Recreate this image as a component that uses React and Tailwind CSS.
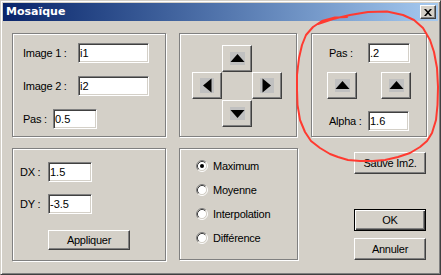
const label = 'text-[11px] tracking-[-0.25px] text-black'

function Field({ value, className }) {
  return (
    <input
      readOnly
      value={value}
      className={`h-[20px] border border-t-[#808080] border-l-[#808080] border-r-white border-b-white bg-white pl-[1px] text-[11px] text-black shadow-[inset_1px_1px_#404040,inset_-1px_-1px_#d4d0c8] outline-none ${className}`}
    />
  )
}

function Btn({ children, className = '', isDefault = false }) {
  const frame = isDefault
    ? 'border border-black shadow-[inset_1px_1px_#fff,inset_-1px_-1px_#404040,inset_-2px_-2px_#808080]'
    : 'border border-t-white border-l-white border-r-[#404040] border-b-[#404040] shadow-[inset_-1px_-1px_#808080]'
  return (
    <div className={`flex items-center justify-center bg-[#d4d0c8] ${frame} ${className}`}>
      {children}
    </div>
  )
}

function Arrow({ dir }) {
  if (dir === 'up' || dir === 'down') {
    return (
      <svg width="15" height="13" viewBox="0 0 15 13">
        <rect width="15" height="13" fill="#c0c0c0" />
        {dir === 'up' ? (
          <polygon points="7.5,2 14.5,10 0.5,10" fill="#000" />
        ) : (
          <polygon points="0.5,3 14.5,3 7.5,11" fill="#000" />
        )}
      </svg>
    )
  }
  return (
    <svg width="14" height="15" viewBox="0 0 14 15">
      <rect width="14" height="15" fill="#c0c0c0" />
      {dir === 'left' ? (
        <polygon points="3,7.5 11.5,0.5 11.5,14.5" fill="#000" />
      ) : (
        <polygon points="11,7.5 2.5,0.5 2.5,14.5" fill="#000" />
      )}
    </svg>
  )
}

function ArrowBtn({ dir, className = '' }) {
  return (
    <Btn className={`h-[27px] w-[30px] ${className}`}>
      <Arrow dir={dir} />
    </Btn>
  )
}

function Radio({ checked, text }) {
  return (
    <div className="flex h-[24px] items-center gap-[5px]">
      <svg width="12" height="12" viewBox="0 0 12 12">
        <circle cx="6" cy="6" r="4.5" fill="#fff" />
        <path d="M2.11 9.89A5.5 5.5 0 0 1 9.89 2.11" stroke="#808080" fill="none" />
        <path d="M9.89 2.11A5.5 5.5 0 0 1 2.11 9.89" stroke="#fff" fill="none" />
        <path d="M2.82 9.18A4.5 4.5 0 0 1 9.18 2.82" stroke="#404040" fill="none" />
        <path d="M9.18 2.82A4.5 4.5 0 0 1 2.82 9.18" stroke="#d4d0c8" fill="none" />
        {checked && <circle cx="6" cy="6" r="2" fill="#000" />}
      </svg>
      <span className={label}>{text}</span>
    </div>
  )
}

function Group({ className, children }) {
  return (
    <div className={`border border-[#808080] shadow-[inset_1px_1px_#fff,1px_1px_#fff] ${className}`}>
      {children}
    </div>
  )
}

export default function App() {
  return (
    <div className="relative h-[275px] w-[441px] overflow-hidden border border-t-[#d4d0c8] border-l-[#d4d0c8] border-r-[#404040] border-b-[#404040] bg-[#d4d0c8] p-[2px] font-['Liberation_Sans',Arial,sans-serif] shadow-[inset_1px_1px_#fff,inset_-1px_-1px_#808080]">
      {/* title bar */}
      <div className="flex h-[18px] items-center justify-between bg-linear-to-r from-[#0a246a] to-[#a6caf0] pl-[3px] pr-[2px]">
        <span className="font-['DejaVu_Sans',sans-serif] text-[11px] font-bold text-white">Mosaïque</span>
        <Btn className="h-[14px] w-[16px]">
          <svg width="8" height="7" viewBox="0 0 8 7">
            <path d="M0 0h2l2 2.3L6 0h2L5 3.5 8 7H6L4 4.7 2 7H0l3-3.5z" fill="#000" />
          </svg>
        </Btn>
      </div>

      {/* top row */}
      <div className="mt-[12px] ml-[9px] flex">
        <Group className="h-[104px] w-[154px] pt-[9px] pl-[10px]">
          <div className="flex h-[20px] items-center">
            <span className={`w-[55px] ${label}`}>Image 1 :</span>
            <Field value="i1" className="w-[71px]" />
          </div>
          <div className="mt-[13px] flex h-[20px] items-center">
            <span className={`w-[55px] ${label}`}>Image 2 :</span>
            <Field value="i2" className="w-[71px]" />
          </div>
          <div className="mt-[13px] flex h-[20px] items-center">
            <span className={`w-[30px] ${label}`}>Pas :</span>
            <Field value="0.5" className="w-[44px]" />
          </div>
        </Group>

        <Group className="ml-[13px] h-[104px] w-[118px] pt-[11px] pl-[12px]">
          <div className="grid grid-cols-[30px_30px_30px] grid-rows-[27px_28px_27px]">
            <ArrowBtn dir="up" className="col-start-2 row-start-1" />
            <ArrowBtn dir="left" className="col-start-1 row-start-2" />
            <ArrowBtn dir="right" className="col-start-3 row-start-2" />
            <ArrowBtn dir="down" className="col-start-2 row-start-3" />
          </div>
        </Group>

        <Group className="ml-[14px] h-[104px] w-[116px] pt-[9px] pl-[15px]">
          <div className="ml-[2px] flex h-[20px] items-center">
            <span className={`w-[39px] ${label}`}>Pas :</span>
            <Field value=".2" className="w-[42px]" />
          </div>
          <div className="mt-[9px] flex gap-[24px]">
            <ArrowBtn dir="up" />
            <ArrowBtn dir="up" />
          </div>
          <div className="mt-[12px] ml-[2px] flex h-[20px] items-center">
            <span className={`w-[39px] ${label}`}>Alpha :</span>
            <Field value="1.6" className="w-[41px]" />
          </div>
        </Group>
      </div>

      {/* bottom row */}
      <div className="mt-[11px] ml-[9px] flex">
        <Group className="h-[113px] w-[154px] pt-[13px] pl-[7px]">
          <div className="flex h-[20px] items-center">
            <span className={`w-[28px] ${label}`}>DX :</span>
            <Field value="1.5" className="w-[44px]" />
          </div>
          <div className="mt-[12px] flex h-[20px] items-center">
            <span className={`w-[28px] ${label}`}>DY :</span>
            <Field value="-3.5" className="w-[44px]" />
          </div>
          <Btn className={`mt-[16px] ml-[28px] h-[20px] w-[82px] ${label}`}>Appliquer</Btn>
        </Group>

        <Group className="ml-[13px] h-[112px] w-[119px] pt-[5px] pl-[16px]">
          <Radio checked text="Maximum" />
          <Radio text="Moyenne" />
          <Radio text="Interpolation" />
          <Radio text="Différence" />
        </Group>

        <div className="ml-[56px] flex w-[72px] flex-col">
          <Btn className={`mt-[4px] h-[22px] w-full ${label}`}>Sauve Im2.</Btn>
          <Btn isDefault className={`mt-[35px] h-[22px] w-full ${label}`}>OK</Btn>
          <Btn className={`mt-[7px] h-[22px] w-full ${label}`}>Annuler</Btn>
        </div>
      </div>

      {/* hand-drawn red annotation */}
      <svg className="pointer-events-none absolute top-[-1px] left-[-1px]" width="441" height="275" viewBox="0 0 441 275">
        <polyline
          points="318,24 333,19 350,15 368,12 387,11.5 403,15 414,20 423,28 430,40 434,52 437,68 438,87 437.5,105 436,120 432,133 427,141 420,147 410,153 398,157 385,160 373,161 360,161 348,160 338,157 330,154 320,148 311,141 305,132 300,120 297.5,105 297,90 297,75 299,58 302,45 306,35 313,27 322,21 335,17.5 347,17"
          fill="none"
          stroke="#ff3a30"
          strokeWidth="2"
          strokeLinejoin="round"
          strokeLinecap="round"
        />
      </svg>
    </div>
  )
}
